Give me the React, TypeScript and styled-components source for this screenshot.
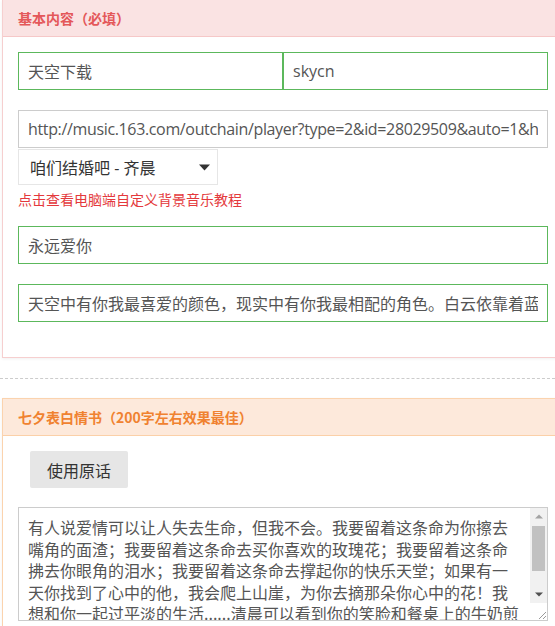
import React from "react";
import styled, { createGlobalStyle } from "styled-components";

const Global = createGlobalStyle`
  html, body { margin: 0; padding: 0; background: #fff; overflow: hidden; }
  body { font-family: "Open Sans", "Noto Sans CJK SC", sans-serif; color: #555; }
  * { box-sizing: border-box; }
`;

const Page = styled.div`
  width: 555px;
  height: 626px;
  overflow: hidden;
  display: flex;
  flex-direction: column;
`;

const Panel = styled.section<{ $tone: "pink" | "orange" }>`
  margin-left: 2px;
  width: 580px;
  flex-shrink: 0;
  border: 1px solid ${(p) => (p.$tone === "pink" ? "#f6cfcf" : "#fbd3ae")};
  border-top: ${(p) => (p.$tone === "pink" ? "none" : undefined)};
  background: #fff;
  box-shadow: 0 1px 3px rgba(0, 0, 0, 0.06);
`;

const PanelHead = styled.div<{ $tone: "pink" | "orange" }>`
  height: 37px;
  padding-left: 15px;
  display: flex;
  align-items: center;
  font-family: "Noto Sans CJK SC", sans-serif;
  font-size: 14px;
  font-weight: 700;
  color: ${(p) => (p.$tone === "pink" ? "#e4585a" : "#f08230")};
  background: ${(p) => (p.$tone === "pink" ? "#fae3e3" : "#fde9db")};
  border-bottom: 1px solid ${(p) => (p.$tone === "pink" ? "#f6c8c8" : "#fbd0a8")};
`;

const PanelBody = styled.div<{ $bottom: number }>`
  padding: 15px 0 ${(p) => p.$bottom}px 15px;
  display: flex;
  flex-direction: column;
  align-items: flex-start;
`;

const Row = styled.div`
  display: flex;
  width: 530px;
`;

const Field = styled.input<{ $ok?: boolean; $w?: number; $tight?: boolean }>`
  display: block;
  width: ${(p) => p.$w ?? 530}px;
  height: 38px;
  padding: 0 9px;
  border: 1px solid ${(p) => (p.$ok ? "#5cb85c" : "#cccccc")};
  border-radius: 0;
  outline: none;
  background: #fff;
  font-family: "Open Sans", "Noto Sans CJK SC", sans-serif;
  font-size: 16px;
  letter-spacing: ${(p) => (p.$tight ? "-0.35px" : "0")};
  color: #555;
`;

const Gap = styled.div<{ $h: number }>`
  height: ${(p) => p.$h}px;
  flex-shrink: 0;
`;

const SelectBox = styled.div`
  margin-top: 1px;
  width: 200px;
  height: 36px;
  padding: 0 7px 0 11px;
  border: 1px solid #e6e6e6;
  display: flex;
  align-items: center;
  justify-content: space-between;
  font-family: "Open Sans", "Noto Sans CJK SC", sans-serif;
  font-size: 16px;
  color: #333;
`;

const Hint = styled.a`
  margin-top: 4px;
  font-family: "Noto Sans CJK SC", sans-serif;
  font-size: 14px;
  line-height: 20px;
  color: #e4393c;
  text-decoration: none;
  cursor: pointer;
`;

const Divider = styled.hr`
  margin: 20px 0 19px 0;
  width: 555px;
  border: none;
  border-top: 1px dashed #cccccc;
  flex-shrink: 0;
`;

const Button = styled.button`
  margin-left: 12px;
  width: 98px;
  height: 37px;
  border: none;
  border-radius: 2px;
  background: #e6e6e6;
  font-family: "Noto Sans CJK SC", sans-serif;
  font-size: 16px;
  color: #333;
  cursor: pointer;
`;

const LetterBox = styled.div`
  margin-top: 19px;
  width: 530px;
  height: 114px;
  border: 1px solid #cccccc;
  display: flex;
  background: #fff;
`;

const Letter = styled.textarea`
  flex: 1;
  min-width: 0;
  height: 100%;
  padding: 9px 9px 0 9px;
  border: none;
  outline: none;
  resize: none;
  overflow: hidden;
  font-family: "Noto Sans CJK SC", sans-serif;
  font-size: 16px;
  line-height: 21.5px;
  color: #555;
`;

const Rail = styled.div`
  width: 17px;
  flex-shrink: 0;
  display: flex;
  flex-direction: column;
`;

const RailButton = styled.div`
  height: 17px;
  flex-shrink: 0;
  background: #f1f1f1;
  display: flex;
  align-items: center;
  justify-content: center;
`;

const Track = styled.div`
  flex: 1;
  background: #f1f1f1;
  padding: 1px 2px 0 2px;
`;

const Thumb = styled.div`
  height: 45px;
  background: #c1c1c1;
`;

const Corner = styled.div`
  height: 17px;
  flex-shrink: 0;
  background: #fff;
  display: flex;
  align-items: flex-end;
  justify-content: flex-end;
`;

const Caret = () => (
  <svg width="11" height="7" viewBox="0 0 11 7">
    <path d="M0 0.5 L11 0.5 L5.5 6.5 Z" fill="#333" />
  </svg>
);

const Arrow = ({ up, color }: { up?: boolean; color: string }) => (
  <svg width="8" height="5" viewBox="0 0 8 5">
    <path d={up ? "M0 4.5 L8 4.5 L4 0.5 Z" : "M0 0.5 L8 0.5 L4 4.5 Z"} fill={color} />
  </svg>
);

const Grip = () => (
  <svg width="10" height="10" viewBox="0 0 10 10">
    <path d="M9 2 L2 9 M9 6 L6 9" stroke="#9a9a9a" strokeWidth="1" />
  </svg>
);

const letterText =
  "有人说爱情可以让人失去生命，但我不会。我要留着这条命为你擦去嘴角的面渣；我要留着这条命去买你喜欢的玫瑰花；我要留着这条命拂去你眼角的泪水；我要留着这条命去撑起你的快乐天堂；如果有一天你找到了心中的他，我会爬上山崖，为你去摘那朵你心中的花！我想和你一起过平淡的生活......清晨可以看到你的笑脸和餐桌上的牛奶煎蛋，然后一起出门，很努力地工作，下班去超市买菜，一起回家做晚饭，饭后一起散步，聊聊一天的见闻，然后相拥而眠。";

export default function App() {
  return (
    <Page>
      <Global />
      <Panel $tone="pink">
        <PanelHead $tone="pink">基本内容（必填）</PanelHead>
        <PanelBody $bottom={35}>
          <Row>
            <Field $ok $w={265} readOnly value="天空下载" />
            <Field $ok $w={265} readOnly value="skycn" />
          </Row>
          <Gap $h={20} />
          <Field
            $tight
            readOnly
            value="http://music.163.com/outchain/player?type=2&id=28029509&auto=1&height=66"
          />
          <SelectBox>
            <span>咱们结婚吧 - 齐晨</span>
            <Caret />
          </SelectBox>
          <Hint>点击查看电脑端自定义背景音乐教程</Hint>
          <Gap $h={17} />
          <Field $ok readOnly value="永远爱你" />
          <Gap $h={20} />
          <Field
            $ok
            readOnly
            value="天空中有你我最喜爱的颜色，现实中有你我最相配的角色。白云依靠着蓝天，我依靠着你。"
          />
        </PanelBody>
      </Panel>
      <Divider />
      <Panel $tone="orange">
        <PanelHead $tone="orange">七夕表白情书（200字左右效果最佳）</PanelHead>
        <PanelBody $bottom={20}>
          <Button>使用原话</Button>
          <LetterBox>
            <Letter readOnly value={letterText} />
            <Rail>
              <RailButton>
                <Arrow up color="#a3a3a3" />
              </RailButton>
              <Track>
                <Thumb />
              </Track>
              <RailButton>
                <Arrow color="#505050" />
              </RailButton>
              <Corner>
                <Grip />
              </Corner>
            </Rail>
          </LetterBox>
        </PanelBody>
      </Panel>
    </Page>
  );
}
